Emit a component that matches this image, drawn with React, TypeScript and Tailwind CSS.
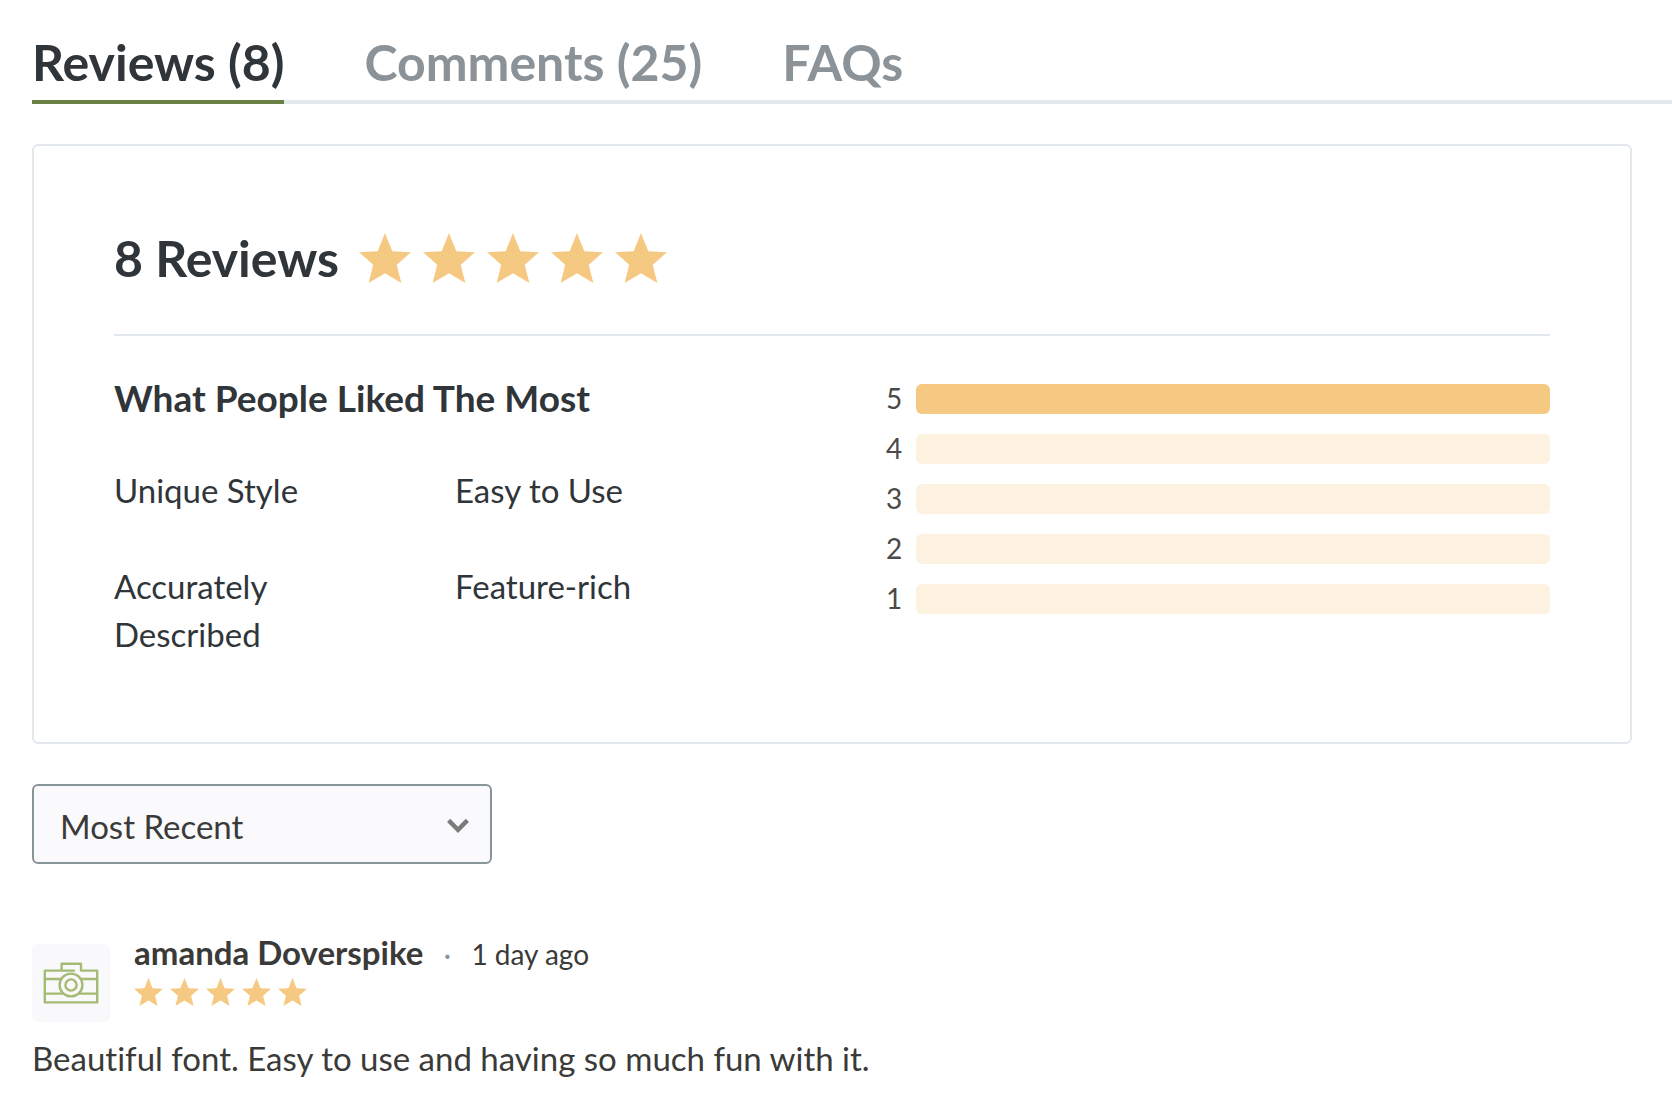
import { useState } from "react";

const tabs = ["Reviews (8)", "Comments (25)", "FAQs"];

const likedMost = ["Unique Style", "Easy to Use", "Accurately Described", "Feature-rich"];

const ratings = [
  { stars: 5, percent: 100 },
  { stars: 4, percent: 0 },
  { stars: 3, percent: 0 },
  { stars: 2, percent: 0 },
  { stars: 1, percent: 0 },
];

interface StarsProps {
  starClass: string;
  className: string;
}

const Stars = ({ starClass, className }: StarsProps) => {
  return (
    <div role="img" aria-label="5 out of 5 stars" className={`flex ${className}`}>
      {[1, 2, 3, 4, 5].map((n) => (
        <svg key={n} viewBox="0 0 52 50" className={`fill-[#f5c982] ${starClass}`}>
          <path d="M26 0 33.3 18.2 52 19.2 37.8 31.7 42.3 50 26 40.2 9.7 50 14.2 31.7 0 19.2 18.7 18.2Z" />
        </svg>
      ))}
    </div>
  );
};

const CameraIcon = () => {
  return (
    <svg
      viewBox="0 0 56 42"
      className="h-[42px] w-14 fill-none stroke-[#a5bb74]"
      strokeWidth="2.4"
      strokeLinejoin="round"
      strokeLinecap="round"
    >
      <path d="M31 8.6H1.8V40.4H54.2V8.6H38V1.8H18.6V8.6" />
      <path d="M1.8 17H17.5M38 17H54.2M1.8 31.6H20M36 31.6H54.2" />
      <circle cx="28" cy="23" r="11.4" />
      <circle cx="28" cy="23" r="5.6" />
    </svg>
  );
};

const RatingSummary = () => {
  return (
    <section className="mr-10 rounded-md border-2 border-[#e3e8ee] px-20 pt-[76px] pb-[84px]">
      <div className="flex items-center gap-5 border-b-2 border-[#e3e8ee] pb-10">
        <h2 className="text-[50px] leading-[72px] font-bold">8 Reviews</h2>
        <Stars starClass="h-[50px] w-[52px]" className="gap-3" />
      </div>

      <div className="flex pt-[38px]">
        <div className="w-1/2 pr-9">
          <h3 className="text-[37px] leading-12 font-bold">What People Liked The Most</h3>
          <ul className="mt-11 grid grid-cols-2 gap-y-12 text-[33px] leading-12">
            {likedMost.map((item) => (
              <li key={item} className="pr-12">
                {item}
              </li>
            ))}
          </ul>
        </div>

        <ul className="flex w-1/2 flex-col gap-5 pt-2.5 pl-[54px]">
          {ratings.map((rating) => (
            <li key={rating.stars} className="flex items-start">
              <span className="w-[30px] text-[28px] leading-7 text-[#4a4a4a]">{rating.stars}</span>
              <div className="h-[30px] flex-1 overflow-hidden rounded-md bg-[#fdf1e0]">
                <div className="h-full bg-[#f5c982]" style={{ width: `${rating.percent}%` }} />
              </div>
            </li>
          ))}
        </ul>
      </div>
    </section>
  );
};

const SortSelect = () => {
  return (
    <div className="relative mt-10 w-[460px]">
      <select
        aria-label="Sort reviews"
        className="h-20 w-full appearance-none rounded-md border-2 border-[#87959a] bg-[#fafafd] pt-1 pr-16 pl-[26px] text-[33px] leading-12 text-[#3a3a38]"
      >
        <option>Most Recent</option>
        <option>Highest Rated</option>
        <option>Lowest Rated</option>
      </select>
      <svg
        viewBox="0 0 24 16"
        className="pointer-events-none absolute top-[34px] right-[22px] h-4 w-6 fill-none stroke-[#7c7a7a]"
        strokeWidth="4.4"
      >
        <path d="M2.6 2.4 12 11.8 21.4 2.4" />
      </svg>
    </div>
  );
};

const Review = () => {
  return (
    <article className="mt-16 text-[#3a3a38]">
      <div className="flex items-end gap-6">
        <div className="flex h-[78px] w-[78px] items-center justify-center rounded-md bg-[#f9f9fc]">
          <CameraIcon />
        </div>
        <div className="pb-4">
          <div className="flex items-baseline leading-12">
            <span className="text-[33px] font-bold">amanda Doverspike</span>
            <span className="w-12 text-center text-[28px] text-[#8b9399]">·</span>
            <span className="text-[28px]">1 day ago</span>
          </div>
          <Stars starClass="h-7 w-[29px]" className="gap-[7px]" />
        </div>
      </div>
      <p className="mt-3 text-[33px] leading-12">Beautiful font. Easy to use and having so much fun with it.</p>
    </article>
  );
};

const App = () => {
  const [active, setActive] = useState(0);

  return (
    <main className="pb-5 pl-8 font-['Lato','Open_Sans',sans-serif] text-[#30353a] [font-variant-ligatures:none]">
      <div role="tablist" className="mb-10 flex gap-20 border-b-4 border-[#e3e8ee] pt-[30px]">
        {tabs.map((tab, index) => (
          <button
            key={tab}
            role="tab"
            aria-selected={active === index}
            onClick={() => setActive(index)}
            className={`-mb-1 cursor-pointer border-b-4 pb-1.5 text-[50px] leading-[64px] font-bold ${
              active === index ? "border-[#6b8045] text-[#30353a]" : "border-transparent text-[#8b9399]"
            }`}
          >
            {tab}
          </button>
        ))}
      </div>
      <RatingSummary />
      <SortSelect />
      <Review />
    </main>
  );
};

export default App;
